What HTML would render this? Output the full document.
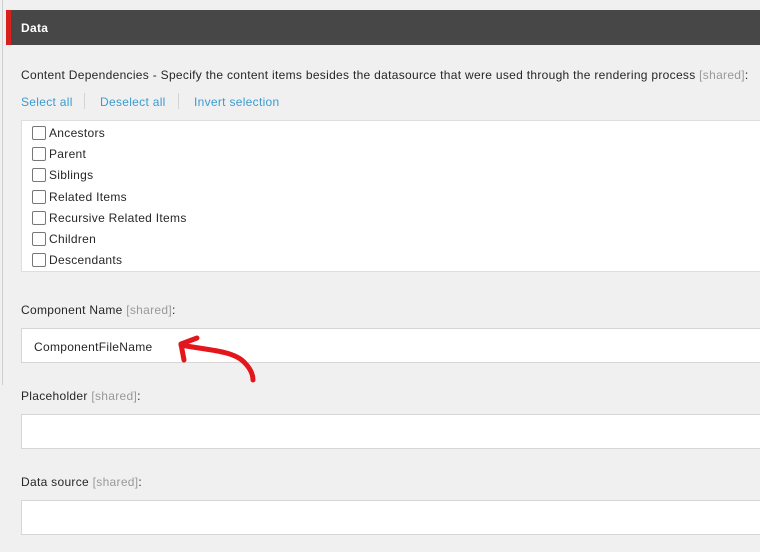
<!DOCTYPE html>
<html><head><meta charset="utf-8"><style>
body{margin:0;width:760px;height:552px;background:#f0f0f0;font-family:"Liberation Sans","DejaVu Sans",sans-serif;font-size:12px;letter-spacing:0.3px;color:#262626;position:relative;overflow:hidden}
.a{position:absolute}
.hdr{left:6px;top:10px;width:754px;height:35px;background:#474747;color:#fff;font-weight:bold;font-size:12px}
.hdr .red{position:absolute;left:0;top:0;width:5px;height:35px;background:#d8201c}
.hdr span{position:absolute;left:15px;top:11px}
.lnk{color:#3b9bd0}
.sep{width:1px;height:16px;background:#d4d4d4}
.box{left:21px;top:120px;width:745px;height:150px;background:#fff;border:1px solid #dedede}
.cb{position:absolute;left:10px;width:12px;height:12px;border:1px solid #777;border-radius:2px;background:#fff}
.cl{position:absolute;left:27px}
.inp{left:21px;width:745px;height:33px;background:#fff;border:1px solid #d6d6d6}
.sh{color:#999}
</style></head><body>
<div class="a" style="left:2px;top:0;width:1px;height:385px;background:#cfcfcf"></div>
<div class="a hdr"><div class="red"></div><span>Data</span></div>
<div class="a" style="left:21px;top:68px">Content Dependencies - Specify the content items besides the datasource that were used through the rendering process <span class="sh">[shared]</span>:</div>
<div class="a lnk" style="left:21px;top:95px">Select all</div>
<div class="a sep" style="left:84px;top:93px"></div>
<div class="a lnk" style="left:100px;top:95px">Deselect all</div>
<div class="a sep" style="left:178px;top:93px"></div>
<div class="a lnk" style="left:194px;top:95px">Invert selection</div>
<div class="a box">
<div class="cb" style="top:5px"></div><div class="cl" style="top:5px">Ancestors</div>
<div class="cb" style="top:26px"></div><div class="cl" style="top:26px">Parent</div>
<div class="cb" style="top:47px"></div><div class="cl" style="top:47px">Siblings</div>
<div class="cb" style="top:69px"></div><div class="cl" style="top:69px">Related Items</div>
<div class="cb" style="top:90px"></div><div class="cl" style="top:90px">Recursive Related Items</div>
<div class="cb" style="top:111px"></div><div class="cl" style="top:111px">Children</div>
<div class="cb" style="top:132px"></div><div class="cl" style="top:132px">Descendants</div>
</div>
<div class="a" style="left:21px;top:303px">Component Name <span class="sh">[shared]</span>:</div>
<div class="a inp" style="top:328px"><span style="position:absolute;left:12px;top:11px">ComponentFileName</span></div>
<div class="a" style="left:21px;top:389px">Placeholder <span class="sh">[shared]</span>:</div>
<div class="a inp" style="top:414px"></div>
<div class="a" style="left:21px;top:475px">Data source <span class="sh">[shared]</span>:</div>
<div class="a inp" style="top:500px"></div>
<svg class="a" style="left:0;top:0" width="760" height="552"><g fill="none" stroke="#e3161c" stroke-width="5" stroke-linecap="round" stroke-linejoin="round">
<path d="M181 345 C205 350 232 350 244 362 C250 368 253 374 253 380"/>
<path d="M197 338 L181 344 L184 360"/></g></svg>
</body></html>
